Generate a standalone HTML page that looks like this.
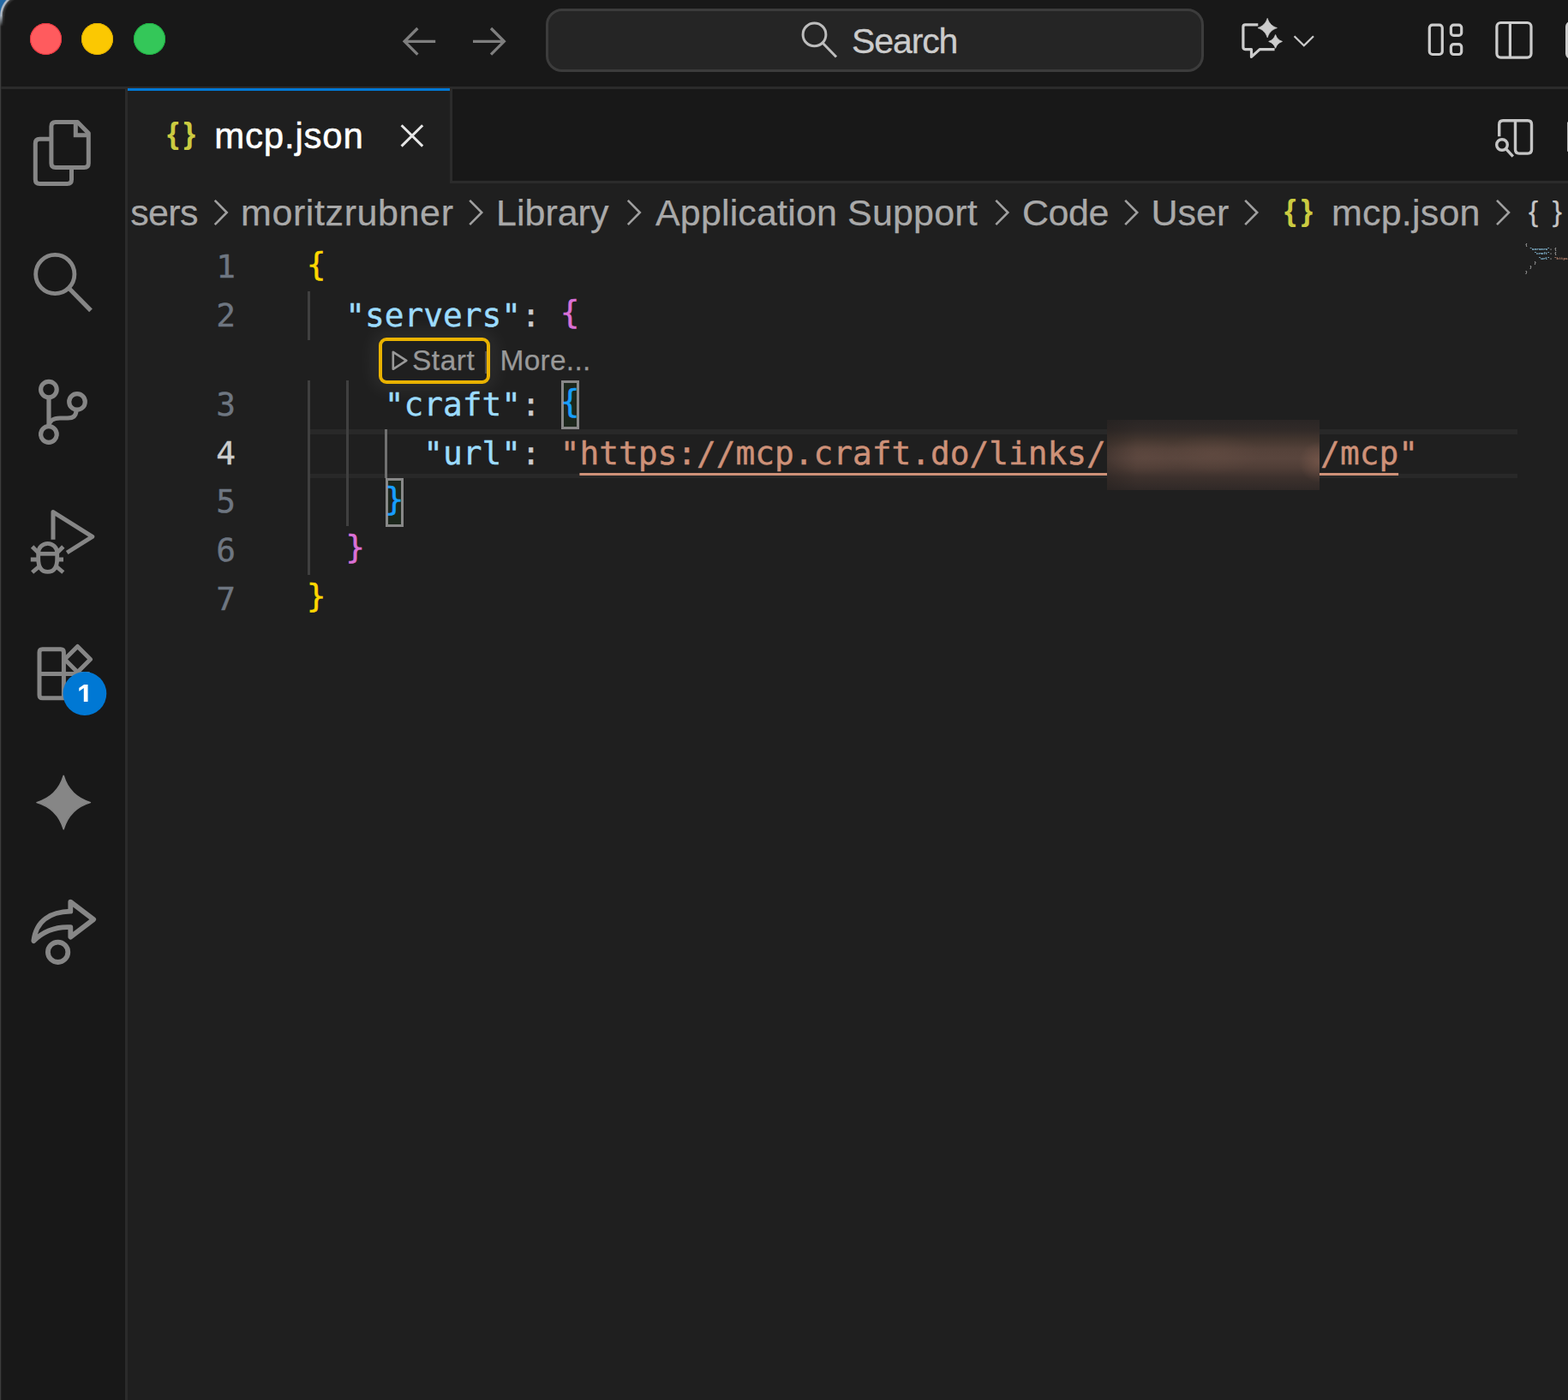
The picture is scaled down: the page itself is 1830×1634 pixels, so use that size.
<!DOCTYPE html>
<html lang="en">
<head>
<meta charset="utf-8">
<title>mcp.json — Visual Studio Code</title>
<style>
html,body{margin:0;padding:0;}
body{width:1830px;height:1634px;overflow:hidden;background:#181818;font-family:"Liberation Sans",sans-serif;}
#win{position:absolute;left:0;top:0;width:1830px;height:1634px;background:#181818;overflow:hidden;}
#corner{position:absolute;left:0;top:0;width:27px;height:18.5px;z-index:60;background:radial-gradient(circle at 27px 18.5px,rgba(24,24,24,0) 20.5px,#2e2e2e 22.6px,#444444 23.8px,#8d96a0 24.6px,#b4bdc7 25.4px,#b4bdc7 26.2px,#6d8fb3 26.9px,#2268a4 27.5px);}
#corner2{position:absolute;left:0;top:18.5px;width:6px;height:12px;z-index:61;background:linear-gradient(90deg,#a0a9b3 0,#a0a9b3 1.6px,#8d96a0 2.4px,#444444 3.2px,#2e2e2e 4.4px,rgba(24,24,24,0) 6px);-webkit-mask-image:linear-gradient(180deg,#000 0,rgba(0,0,0,0) 100%);mask-image:linear-gradient(180deg,#000 0,rgba(0,0,0,0) 100%);}
#ledge{position:absolute;left:0;top:18.5px;width:2px;height:1616px;z-index:60;background:linear-gradient(90deg,#3e3e3e 0,#3a3a3a 1px,rgba(40,40,40,.5) 1.5px,rgba(24,24,24,0) 2px);}
.abs{position:absolute;}
/* title bar */
#titlebar{position:absolute;left:0;top:0;width:1830px;height:101px;background:#181818;}
#titleborder{position:absolute;left:0;top:101px;width:1830px;height:3px;background:#2b2b2b;}
.tl{position:absolute;width:37px;height:37px;border-radius:50%;top:27px;}
#search{position:absolute;left:637px;top:10px;width:768px;height:74px;box-sizing:border-box;border:3px solid #3c3c3c;border-radius:19px;background:#252525;}
#searchtxt{position:absolute;left:994px;top:25px;font-size:41px;line-height:46px;color:#cccccc;letter-spacing:-1.1px;-webkit-text-stroke:0.3px #ccc;white-space:pre;}
/* activity bar */
#activity{position:absolute;left:0;top:104px;width:146px;height:1530px;background:#181818;}
#actborder{position:absolute;left:146px;top:104px;width:3px;height:1530px;background:#2b2b2b;}
/* tabs */
#tabrow{position:absolute;left:149px;top:104px;width:1681px;height:107px;background:#181818;}
#tabrowborder{position:absolute;left:528px;top:211px;width:1302px;height:3px;background:#2b2b2b;}
#tab{position:absolute;left:149px;top:103px;width:376px;height:111px;background:#1f1f1f;}
#tabtop{position:absolute;left:149px;top:103px;width:376px;height:3px;background:#0078d4;}
#tabright{position:absolute;left:525px;top:104px;width:3px;height:110px;background:#2b2b2b;}
#tabtxt{position:absolute;left:250.3px;top:134px;font-size:42px;line-height:50px;color:#ffffff;white-space:pre;letter-spacing:0.77px;-webkit-text-stroke:0.5px #fff;}
.jsonic{position:absolute;font-family:"Liberation Sans",sans-serif;font-weight:bold;color:#cbcb41;white-space:pre;}
/* editor */
#editor{position:absolute;left:149px;top:214px;width:1681px;height:1420px;background:#1f1f1f;}
.bc{position:absolute;top:222px;font-size:43px;line-height:52px;color:#a9a9a9;white-space:pre;-webkit-text-stroke:0.25px currentColor;}
.ln{position:absolute;left:200px;width:75px;text-align:right;font-family:"DejaVu Sans Mono","Liberation Mono",monospace;font-size:37.8px;line-height:56.7px;height:56.7px;color:#6e7681;white-space:pre;}
.cl{position:absolute;left:357.8px;font-family:"DejaVu Sans Mono","Liberation Mono",monospace;font-size:37.8px;line-height:56.7px;height:56.7px;color:#cccccc;white-space:pre;}
.cl{-webkit-text-stroke:0.45px currentColor}.ln{-webkit-text-stroke:0.4px currentColor}.cl .b1,.cl .b2,.cl .b3{position:relative;top:-3.5px}.k{color:#9cdcfe}.s{color:#ce9178}.b1{color:#ffd700}.b2{color:#da70d6}.b3{color:#179fff}
.guide{position:absolute;width:3px;background:#404040;}
.bm{position:absolute;box-sizing:border-box;border:3px solid #888888;background:#1c271c;}
.lens{position:absolute;font-size:33.5px;line-height:40px;color:#999999;white-space:pre;letter-spacing:0.5px;-webkit-text-stroke:0.25px #999;}
</style>
</head>
<body>
<div id="win">
  <div id="corner"></div><div id="ledge"></div><div id="corner2"></div>
  <div id="titlebar"></div>
  <div id="titleborder"></div>
  <div class="tl" style="left:35px;background:#ff5b5e;box-shadow:inset 0 0 0 1px #e8353f;"></div>
  <div class="tl" style="left:95px;background:#fbc802;box-shadow:inset 0 0 0 1px #dfae00;"></div>
  <div class="tl" style="left:155.5px;background:#34c759;box-shadow:inset 0 0 0 1px #1fb043;"></div>

  <div id="search"></div>
  <div id="searchtxt">Search</div>

  <div id="activity"></div>
  <div id="actborder"></div>

  <div id="tabrow"></div>
  <div id="tabrowborder"></div>
  <div id="tab"></div>
  <div id="tabtop"></div>
  <div id="tabright"></div>
  <div id="tabtxt">mcp.json</div>

  <div id="editor"></div>

  <svg class="abs" style="left:0;top:0;z-index:5" width="1830" height="1634" viewBox="0 0 1830 1634" fill="none">
    <!-- title bar: nav arrows -->
    <g stroke="#7f7f7f" stroke-width="3.3" stroke-linecap="butt" stroke-linejoin="miter">
      <path d="M508.2 48.3H473.5M487.4 33L472.1 48.3L487.4 63.6"/>
      <path d="M552 48.3H587M573 33L588.3 48.3L573 63.6"/>
    </g>
    <!-- title bar: search glyph -->
    <g stroke="#bdbdbd" stroke-width="3" stroke-linecap="butt">
      <circle cx="950.5" cy="40.4" r="13.4"/>
      <path d="M960 50L976 66.5"/>
    </g>
    <!-- chat sparkle + chevron -->
    <g stroke="#cccccc" stroke-width="3.2" stroke-linejoin="round" stroke-linecap="butt">
      <path d="M1468.3 28.8H1453.4Q1450.9 28.8 1450.9 31.3V55.1Q1450.9 57.6 1453.4 57.6H1460.5V66.4L1470.2 57.6H1487.6"/>
    </g>
    <path fill="#cccccc" stroke="#cccccc" stroke-width="0.8" stroke-linejoin="round" d="M1479.2 21.4C1481.1 27.2 1484.6 30.7 1490.4 32.6C1484.6 34.5 1481.1 38.0 1479.2 43.8C1477.3 38.0 1473.8 34.5 1468.0 32.6C1473.8 30.7 1477.3 27.2 1479.2 21.4Z"/>
    <path fill="#cccccc" stroke="#cccccc" stroke-width="0.8" stroke-linejoin="round" d="M1488.6 40.5C1490.0 44.6 1492.4 47.0 1496.5 48.4C1492.4 49.8 1490.0 52.2 1488.6 56.3C1487.2 52.2 1484.8 49.8 1480.7 48.4C1484.8 47.0 1487.2 44.6 1488.6 40.5Z"/>
    <path stroke="#cccccc" stroke-width="2.3" d="M1510.6 42.2L1521.8 53.2L1533 42.2"/>
    <!-- layout icons -->
    <g stroke="#cccccc" stroke-width="3.2">
      <rect x="1668.3" y="29.1" width="15" height="34.4" rx="3.5"/>
      <rect x="1693.4" y="29.1" width="12.3" height="12.3" rx="3.2"/>
      <rect x="1693.4" y="51.7" width="12.3" height="11.8" rx="3.2"/>
      <rect x="1746.9" y="26.5" width="40.1" height="40.6" rx="4.5"/>
      <path d="M1762.4 26.5V67.1"/>
      <rect x="1828.6" y="26.5" width="40" height="40.6" rx="4.5"/>
    </g>
    <!-- tab close -->
    <path stroke="#e6e6e6" stroke-width="3" d="M468.6 146.2L493.2 170.6M493.2 146.2L468.6 170.6"/>
    <!-- open preview icon -->
    <g stroke="#c5c5c5" stroke-width="3.4">
      <path d="M1749.7 159.3V145.2Q1749.7 140.7 1754.2 140.7H1783Q1787.5 140.7 1787.5 145.2V174.6Q1787.5 179.1 1783 179.1H1773Q1768.5 179.1 1768.5 174.6V140.7"/>
      <circle cx="1753" cy="169" r="6.3"/>
      <path d="M1757.5 173.6L1765.8 182.6"/>
      <path d="M1830.8 142.4V176.8"/>
    </g>
    <!-- activity bar -->
    <g stroke="#868686" stroke-width="5" stroke-linejoin="round">
      <!-- files -->
      <path d="M64.9 142.4H90.5L103.3 155.6V190.6Q103.3 195.6 98.3 195.6H64.9Q59.9 195.6 59.9 190.6V147.4Q59.9 142.4 64.9 142.4Z"/>
      <path d="M88.3 142.4V157.7H103.3" stroke-linejoin="miter"/>
      <path d="M59.9 162.2H46.3Q41.3 162.2 41.3 167.2V209.4Q41.3 214.4 46.3 214.4H78.5Q83.5 214.4 83.5 209.4V195.6"/>
    </g>
    <g stroke="#868686" stroke-width="4.8">
      <!-- search -->
      <circle cx="64.3" cy="320" r="22.6"/>
      <path d="M80.3 336.3L106 362.4" stroke-width="5.2"/>
    </g>
    <g stroke="#868686" stroke-width="5.2">
      <!-- source control -->
      <circle cx="56.9" cy="454.6" r="9.3"/>
      <circle cx="56.9" cy="507" r="9.3"/>
      <circle cx="90" cy="468.9" r="9.3"/>
      <path d="M57 464V497.6"/>
      <path d="M89 478.4C89 488 82 488 76 488H70C62 488 57 491.5 57 498"/>
    </g>
    <g stroke="#868686" stroke-width="5" stroke-linejoin="round">
      <!-- run & debug -->
      <path d="M62 629.8V597.6L107.8 626.4L78.2 645"/>
    </g>
    <g stroke="#868686" stroke-width="4.8">
      <path d="M44.7 652V645.3A11 11 0 0 1 66.7 645.3V652Q66.7 667.4 55.7 667.4Q44.7 667.4 44.7 652Z"/>
      <path d="M44.7 646.3H66.7"/>
      <path d="M37.6 638L45.2 645.6M73.8 638L66.2 645.6"/>
      <path d="M35.8 653H44.7M66.7 653H74"/>
      <path d="M37.6 668L46.4 660.6M73.8 668L65 660.6"/>
    </g>
    <g stroke="#868686" stroke-width="5" stroke-linejoin="round">
      <!-- extensions -->
      <path d="M46 761.2Q46 757.7 49.5 757.7H70.9Q74.4 757.7 74.4 761.2V814.8H49.5Q46 814.8 46 811.3Z"/>
      <path d="M46 786.4H103V814.8H74.4"/>
      <path d="M90.5 754.5L105.5 769.5L90.5 784.5L75.5 769.5Z"/>
    </g>
    <circle cx="98.9" cy="809.5" r="25.4" fill="#0078d4"/>
    <!-- sparkle -->
    <path fill="#868686" stroke="#868686" stroke-width="1.4" stroke-linejoin="round" d="M74.2 905.3C79.1 921.9 88.9 931.7 105.5 936.6C88.9 941.5 79.1 951.3 74.2 967.9C69.3 951.3 59.5 941.5 42.9 936.6C59.5 931.7 69.3 921.9 74.2 905.3Z"/>
    <!-- live share -->
    <g stroke="#868686" stroke-width="5.8" stroke-linejoin="round">
      <path d="M39.3 1098.2C42.2 1073.1 60.4 1064.3 82.3 1063.7V1052.6L109.2 1073.1L82.3 1093.6V1082.2C63.8 1081.2 50.3 1087.2 39.3 1098.2Z"/>
      <circle cx="67.6" cy="1111.3" r="11.7"/>
    </g>
  </svg>
  <div class="abs" style="left:90px;top:791.8px;width:30px;height:27px;overflow:hidden;z-index:6;"><div style="font-size:29px;line-height:33px;font-weight:bold;color:#fff;transform-origin:0 0;transform:scale(1.16,1.18);">1</div></div>

  <!-- tab icon -->
  <div class="jsonic" style="left:195px;top:131.2px;font-size:35.5px;line-height:50px;letter-spacing:5.4px;">{}</div>
  <!-- breadcrumbs -->
  <div class="bc" style="left:121.7px;clip-path:inset(0 0 0 30px);letter-spacing:-0.6px;">Users</div>
  <div class="bc" style="left:281px;letter-spacing:0.6px;">moritzrubner</div>
  <div class="bc" style="left:579px;">Library</div>
  <div class="bc" style="left:765px;letter-spacing:0.15px;">Application Support</div>
  <div class="bc" style="left:1193px;letter-spacing:-0.5px;">Code</div>
  <div class="bc" style="left:1343.5px;">User</div>
  <div class="jsonic" style="left:1499px;top:220.8px;font-size:35px;line-height:50px;letter-spacing:6px;">{}</div>
  <div class="bc" style="left:1554px;letter-spacing:0.2px;">mcp.json</div>
  <div class="bc" style="left:1784px;top:224.2px;font-size:33.5px;line-height:46px;color:#c5c5c5;letter-spacing:16.5px;">{}</div>
  <svg class="abs" style="left:0;top:0;z-index:4" width="1830" height="1634" viewBox="0 0 1830 1634" fill="none">
    <g stroke="#a0a0a0" stroke-width="2.6">
      <path d="M250.7 233.8L264.7 248L250.7 262.2"/>
      <path d="M548.2 233.8L562.2 248L548.2 262.2"/>
      <path d="M732.8 233.8L746.8 248L732.8 262.2"/>
      <path d="M1162.3 233.8L1176.3 248L1162.3 262.2"/>
      <path d="M1313.2 233.8L1327.2 248L1313.2 262.2"/>
      <path d="M1453.2 233.8L1467.2 248L1453.2 262.2"/>
      <path d="M1747.0 233.8L1761.0 248L1747.0 262.2"/>
    </g>
  </svg>

  <!-- current line highlight -->
  <div class="abs" style="left:361px;top:501px;width:1410px;height:57px;box-sizing:border-box;border-top:6px solid #282828;border-bottom:5px solid #282828;"></div>
  <!-- indent guides -->
  <div class="guide" style="left:358.5px;top:340.2px;height:56.4px;"></div>
  <div class="guide" style="left:358.5px;top:443.9px;height:226.8px;"></div>
  <div class="guide" style="left:404.2px;top:443.9px;height:170.2px;"></div>
  <div class="guide" style="left:449.2px;top:501px;height:56.7px;background:#707070;"></div>
  <!-- bracket match -->
  <div class="bm" style="left:654.8px;top:443.9px;width:21.5px;height:57.4px;"></div>
  <div class="bm" style="left:449.6px;top:557.6px;width:21.5px;height:57px;"></div>
  <!-- line numbers -->
  <div class="ln" style="top:283.2px;">1</div>
  <div class="ln" style="top:339.9px;">2</div>
  <div class="ln" style="top:443.8px;">3</div>
  <div class="ln" style="top:500.5px;color:#cccccc;">4</div>
  <div class="ln" style="top:557.2px;">5</div>
  <div class="ln" style="top:613.9px;">6</div>
  <div class="ln" style="top:670.6px;">7</div>
  <!-- code -->
  <div class="cl" style="top:283.2px;"><span class="b1">{</span></div>
  <div class="cl" style="top:339.9px;">  <span class="k">"servers"</span>: <span class="b2">{</span></div>
  <div class="cl" style="top:443.8px;">    <span class="k">"craft"</span>: <span class="b3">{</span></div>
  <div class="cl" style="top:500.5px;">      <span class="k">"url"</span>: <span class="s">"<span style="text-decoration:underline;text-decoration-thickness:3px;text-underline-offset:9.6px;text-decoration-skip-ink:none;">https://mcp.craft.do/links/           /mcp</span>"</span></div>
  <div class="cl" style="top:557.2px;">    <span class="b3">}</span></div>
  <div class="cl" style="top:613.9px;">  <span class="b2">}</span></div>
  <div class="cl" style="top:670.6px;"><span class="b1">}</span></div>
  <!-- redaction blur -->
  <div class="abs" style="left:1292px;top:490px;width:248px;height:82px;background:radial-gradient(ellipse 24px 24px at 100% 60%,rgba(140,100,84,.5),rgba(140,100,84,0) 100%),radial-gradient(ellipse 55px 24px at 50% 48%,rgba(110,84,72,.3),rgba(110,84,72,0) 100%),radial-gradient(ellipse 45px 22px at 18% 52%,rgba(105,80,70,.25),rgba(105,80,70,0) 100%),linear-gradient(90deg,rgba(31,28,27,.35) 0,rgba(31,28,27,0) 14%),linear-gradient(180deg,#2a2625 0%,#312a28 14%,#43362f 28%,#55423a 42%,#59453d 55%,#503e37 68%,#3d312d 82%,#302927 100%);"></div>
  <!-- code lens -->
  <div class="abs" style="left:442px;top:394px;width:130px;height:54px;box-sizing:border-box;border:4px solid #e9b200;border-radius:9px;background:#1f1f1f;box-shadow:0 0 22px 6px rgba(255,255,255,0.07);"></div>
  <svg class="abs" style="left:0;top:0;z-index:4" width="1830" height="1634" viewBox="0 0 1830 1634" fill="none">
    <path stroke="#999999" stroke-width="2.6" stroke-linejoin="round" d="M458.8 410.8V430.8L474.3 420.8Z"/>
  </svg>
  <div class="abs" style="left:566.2px;top:410px;width:1.4px;height:26px;background:#4c4c4c;"></div>
  <div class="lens" style="left:481px;top:401px;">Start</div>
  <div class="lens" style="left:583.5px;top:401px;letter-spacing:0.25px;">More...</div>
  <!-- minimap -->
  <div class="abs" style="left:1779.5px;top:283px;transform-origin:0 0;transform:scale(0.1148,0.0935);opacity:.78;-webkit-text-stroke:2.5px currentColor;font-family:'DejaVu Sans Mono','Liberation Mono',monospace;font-size:37.8px;line-height:56.7px;color:#cccccc;white-space:pre;"><span>{</span>
  <span class="k">"servers"</span>: <span>{</span>
    <span class="k">"craft"</span>: <span>{</span>
      <span class="k">"url"</span>: <span class="s">"https://mcp.craft.do/links/"</span>
    <span>}</span>
  <span>}</span>
<span>}</span></div>
</div>
</body>
</html>
